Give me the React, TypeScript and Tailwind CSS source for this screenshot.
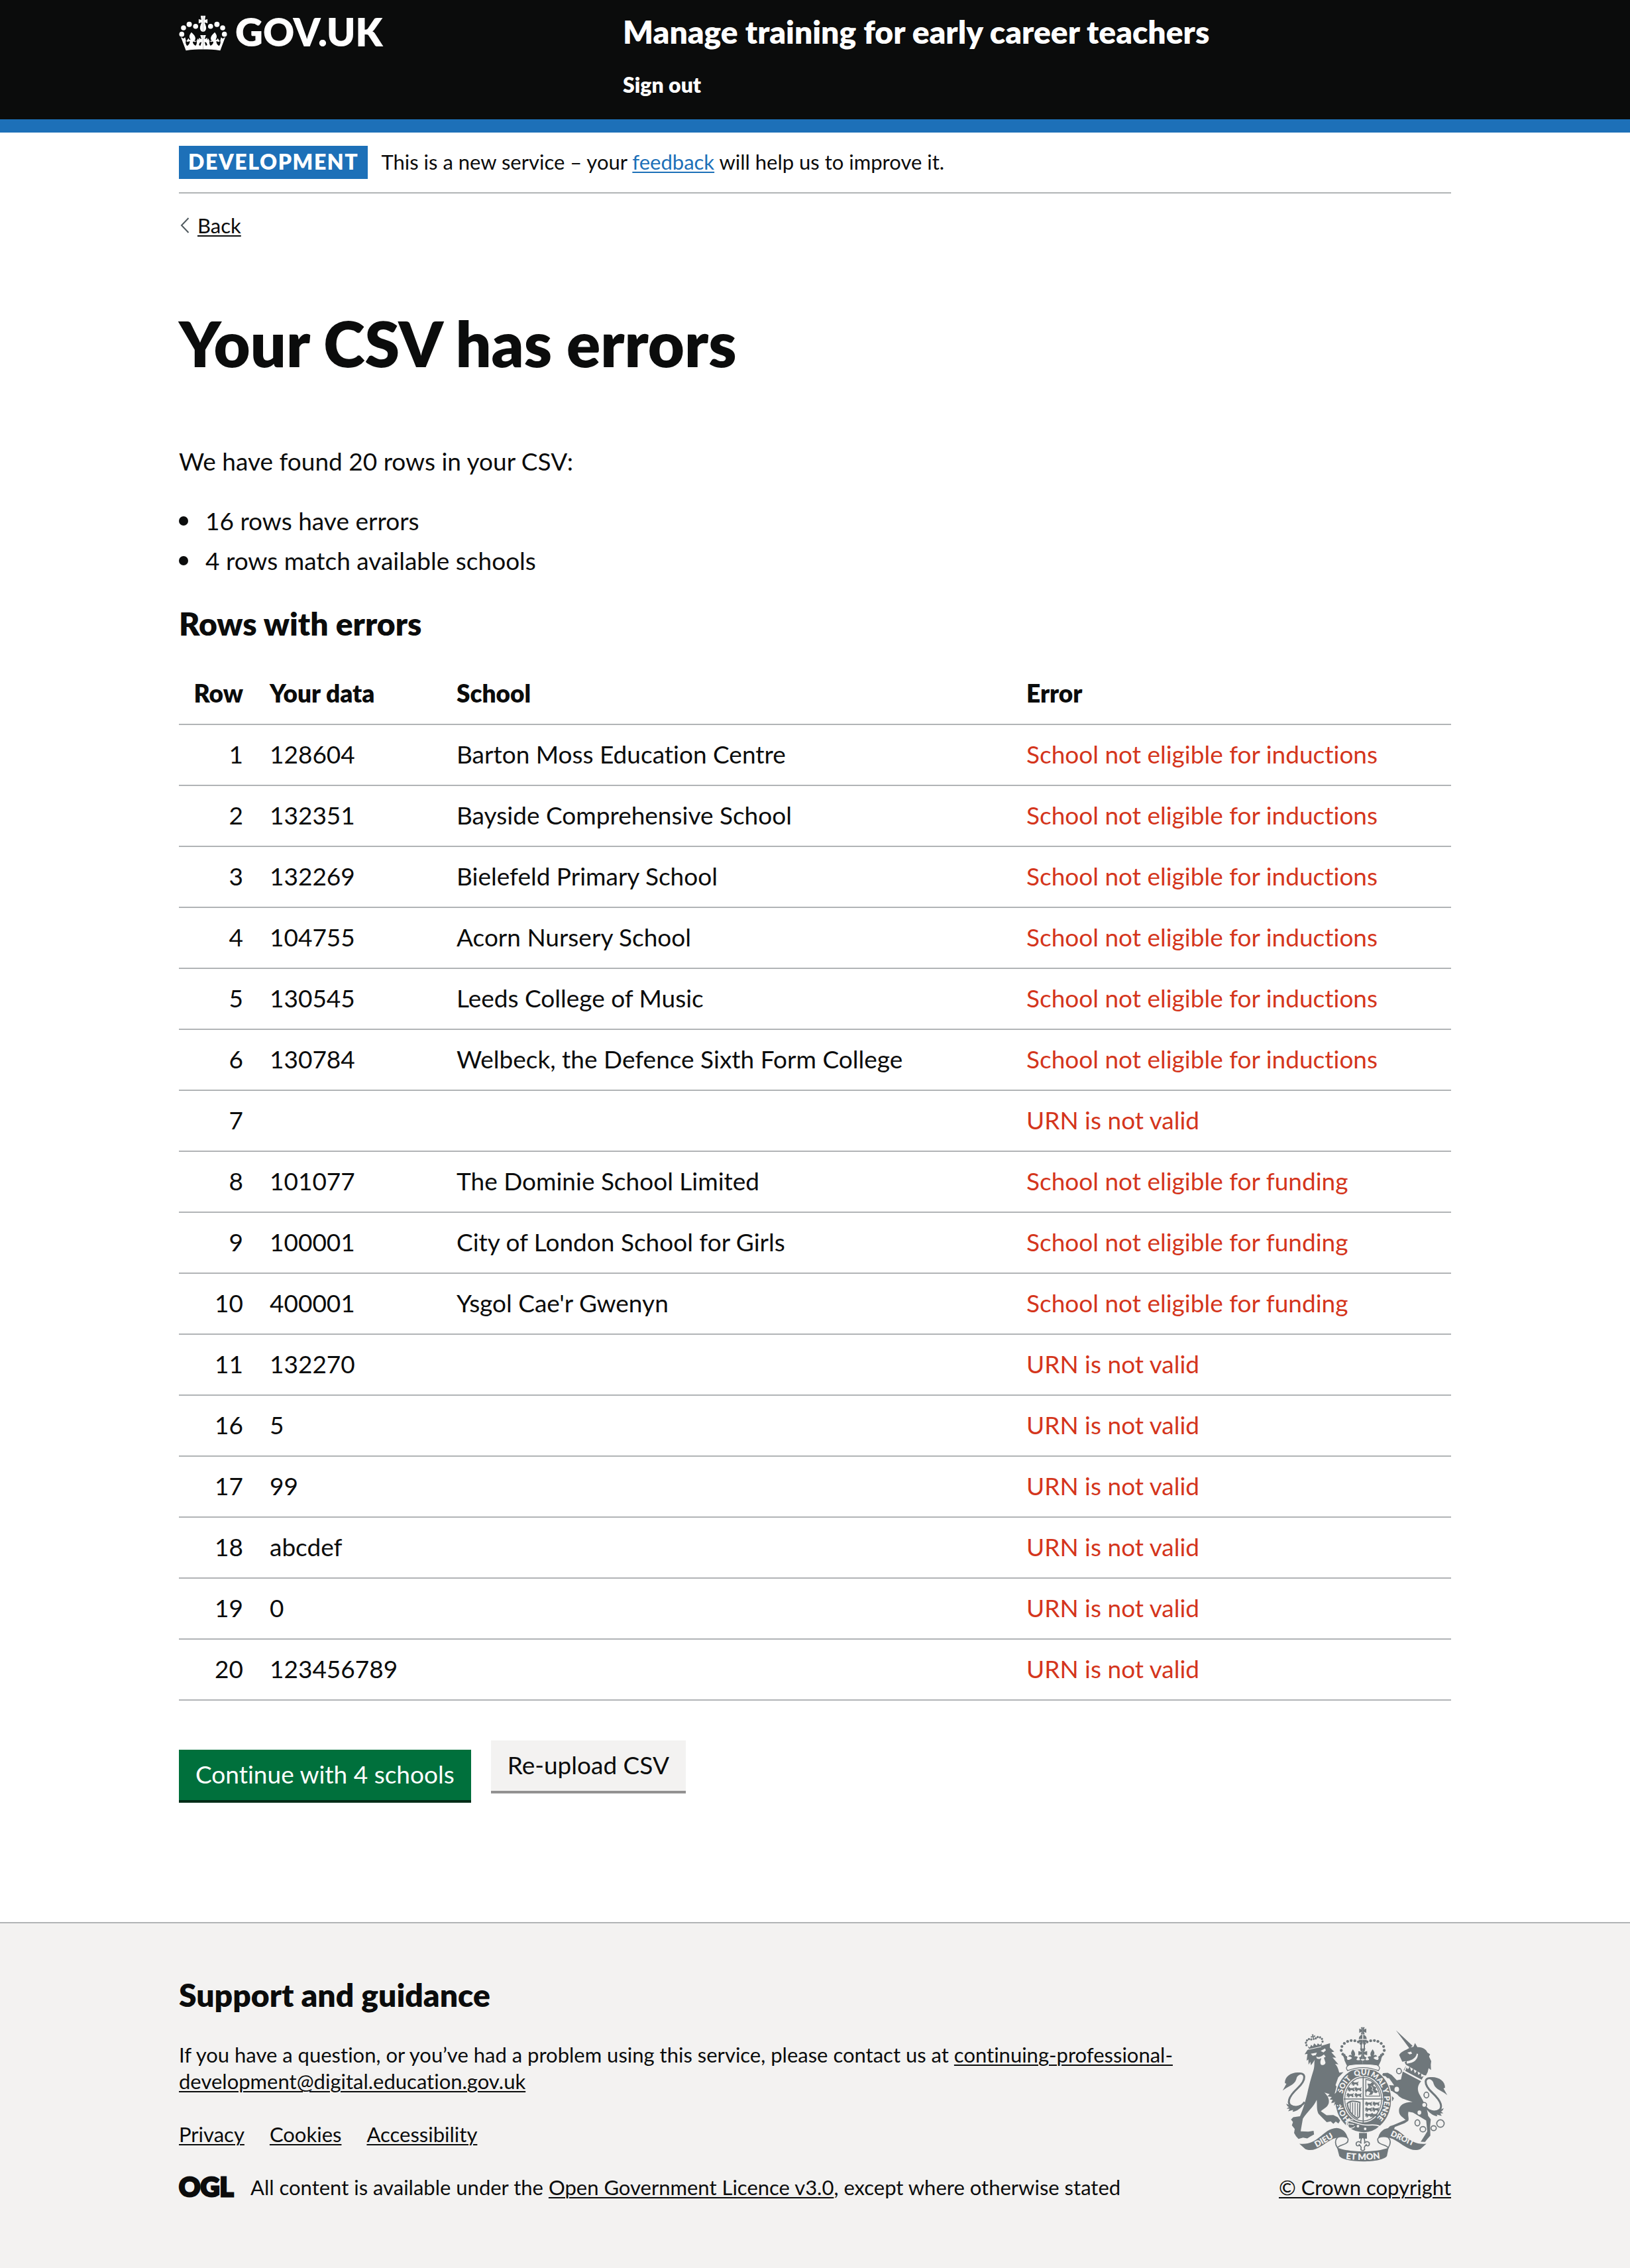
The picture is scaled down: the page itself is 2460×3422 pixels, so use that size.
import React from "react";

type ErrorRow = { row: number; data: string; school: string; error: string };

const INDUCTIONS = "School not eligible for inductions";
const FUNDING = "School not eligible for funding";
const INVALID = "URN is not valid";

const rows: ErrorRow[] = [
  { row: 1, data: "128604", school: "Barton Moss Education Centre", error: INDUCTIONS },
  { row: 2, data: "132351", school: "Bayside Comprehensive School", error: INDUCTIONS },
  { row: 3, data: "132269", school: "Bielefeld Primary School", error: INDUCTIONS },
  { row: 4, data: "104755", school: "Acorn Nursery School", error: INDUCTIONS },
  { row: 5, data: "130545", school: "Leeds College of Music", error: INDUCTIONS },
  { row: 6, data: "130784", school: "Welbeck, the Defence Sixth Form College", error: INDUCTIONS },
  { row: 7, data: "", school: "", error: INVALID },
  { row: 8, data: "101077", school: "The Dominie School Limited", error: FUNDING },
  { row: 9, data: "100001", school: "City of London School for Girls", error: FUNDING },
  { row: 10, data: "400001", school: "Ysgol Cae'r Gwenyn", error: FUNDING },
  { row: 11, data: "132270", school: "", error: INVALID },
  { row: 16, data: "5", school: "", error: INVALID },
  { row: 17, data: "99", school: "", error: INVALID },
  { row: 18, data: "abcdef", school: "", error: INVALID },
  { row: 19, data: "0", school: "", error: INVALID },
  { row: 20, data: "123456789", school: "", error: INVALID },
];

const CONTAINER = "mx-auto w-full max-w-[1920px]";
const LINK = "underline decoration-2 underline-offset-[3px]";

/* Half of the header crown; the other half is its mirror image. */
function CrownHalf() {
  return (
    <>
      <circle cx="41" cy="124" r="11.5" />
      <circle cx="49" cy="95" r="11.5" />
      <circle cx="75" cy="79" r="12" />
      <circle cx="104" cy="88" r="11.5" />
      <path d="M138 40h-11l3 19c-3-1-8-2-12-4v20c4-2 9-4 13-4-1 6-7 14-7 25 0 9 6 17 14 17z" />
      <path d="M85 115c-7 9-12 17-7 28l3 7c-5 0-8-2-8-6l-2-1-9 13 8 3c2-3 4-4 8-2-1 11-6 17-13 20-6-8-8-15-5-24l-4-15-3 2c-1 3-4 4-7 2l-9-5 23 61c26-4 52-5 78-5v-17c-7 1-16 0-19-3 2-6 4-11 5-17l-10-12-3 3c3 4-1 8-12 8 8-14 4-24-14-40zm6 44c4-2 8-2 11 1l6-6c3 8 1 18-4 22-7-2-12-9-13-17z" />
      <path d="M138 128h-13l6 18c-4-1-8-3-12-6v25c4-3 8-5 12-6l-5 18h12z" />
    </>
  );
}

function Crown() {
  return (
    <svg viewBox="28 38 220 165" className="h-[55px] w-[73px] shrink-0" fill="currentColor" aria-hidden="true">
      <CrownHalf />
      <g transform="translate(276 0) scale(-1 1)">
        <CrownHalf />
      </g>
    </svg>
  );
}

function ArmsTail() {
  return (
    <g>
      <path d="M158 299c58-18 51 27 12 63-41 38-54 72-22 83 21 6 40 0 54-20" fill="none" stroke="#6f777b" strokeWidth="9" />
      <path d="M178 291c-36-3-67 18-66 48l7 3-17 31c18-18 54-24 62-52 2-11 8-18 20-22z" />
      <path d="M118 432c4 10 6 13 13 15l-11 8 14 1-7 11 23-6-3 8c19-2 31-12 44-25l-9-6-30 10z" />
    </g>
  );
}

function ArmsCrownHalf() {
  return (
    <>
      {[
        [390, 221], [376, 207], [369, 190], [372, 172], [383, 158], [398, 149], [414, 145], [431, 146], [447, 151], [459, 158],
      ].map(([x, y]) => (
        <circle key={x} cx={x} cy={y} r="6.5" />
      ))}
      <path d="M467 84h-9l4 11-11-5v20l11-5-4 12h9z" />
      <path d="M465 118v20h-16c0-10 6-18 16-20zM448 142h19v14c-10 0-17-5-19-14z" />
      <rect x="457" y="161" width="6" height="31" />
      <path d="M422 185c-7 11-12 17-4 28-8-5-13-4-17 5 8-1 13 1 17 7-8 7-14 9-21 7l-11-27-11 8c6 6 8 14 9 23l14 30c21-7 46-10 69-10v-19l-9-4 5-17-16 7c-6-7-11-8-18-6 6-11 3-17-7-32z" />
      <path d="M467 181h-13l8 16-15-4v19l15-5-7 22h12z" />
      <path d="M438 232c6 3 12 4 17 1l-5-11c-4-3-7-1-12 10z" fill="#f3f2f1" />
    </>
  );
}

/* A small walking lion, as repeated in the quarters of the shield. */
function PassantLion({ x, y }: { x: number; y: number }) {
  return (
    <path
      transform={`translate(${x} ${y})`}
      d="M2 4l7-3 5 5 14-1 7-5-4 9 2 10-7 1-1-5-9-1-3 7-7-1 4-6-9 4 3-7-5-3 6-1z"
    />
  );
}

function RoyalArms() {
  return (
    <svg viewBox="100 82 754 616" className="h-[204px] w-[250px]" fill="#6f777b" role="img" aria-label="Royal coat of arms">
      <defs>
        <path id="arms-garter" d="M469 525A96 112 0 0 1 469 301A96 112 0 0 1 469 525" />
        <path id="arms-left" d="M242 640Q298 610 348 578" />
        <path id="arms-foot" d="M378 683Q467 695 558 681" />
        <path id="arms-right" d="M578 572Q640 600 714 634" />
      </defs>

      {/* lion */}
      <ArmsTail />
      <path d="M202 207l13-19 84-25 19-6-1 20 20 18-13 3 22 25-17-1 27 31-15-2c11 12 14 22 19 40l19-2-24 24-12 35c17 26 29 47 38 78l-11 20-9-8-6 11-9-13-10 5 4-15-17 4 8-14-15-3 10-11-20-3 10-10-24-7c15 15 24 29 20 48-6 21-23 24-36 37l26 18 31-1 20 10 11 15-8 14-12-9-11 10-12-11-18 4-16-16-22-23c-10-21-5-41-8-63-13 32-44 55-63 86l-6 34-4 23 35 2 24-4 2 17-15 8-16 10-19-4-21 6-11-12-9-15 3-18-13-17 5-15-9-11 10-11 31-4c13-30 22-59 32-99 7-33 17-73 30-113 6-20 1-34 6-46l-18 26-3-17-8 14-1-24-8 6 4-31z" />
      <path d="M230 205l28-5-5 11-14 3zM275 192l20-11 4 8-11 10zM255 218c12 5 22 0 35-10l8 11-8 4 7 22c0 12-22 18-23 2-1-9 3-14 4-22l-9 4-11-2z" fill="#f3f2f1" />
      <g transform="rotate(-13 246 155)">
        <path d="M213 164l9 7 8-10 6 9 9-13 9 13 7-9 8 10 10-7-6 21h-54z" />
        <path d="M243 116h8l-2 8 8-2v8l-8-2 2 14h-8l2-14-8 2v-8l8 2z" />
        {[[209, 158], [209, 146], [216, 137], [226, 133], [236, 137], [257, 137], [267, 133], [277, 137], [284, 146], [284, 158]].map(([x, y]) => (
          <circle key={`${x}-${y}`} cx={x} cy={y} r="5" />
        ))}
        <path d="M217 179h56" stroke="#f3f2f1" strokeWidth="3" />
      </g>

      {/* unicorn */}
      <g transform="translate(954 21) scale(-1 1)">
        <ArmsTail />
      </g>
      <path d="M618 98l76 71-14 12zM633 211c8-17 27-20 49-34l16-4 7-17 11 19c23-2 40 10 46 25l12 7-5 11 10 21-2 15 1 25-11-8-4 17-8 16c-29-2-58-16-77-40l-12-4-8-16 7-6-18 3z" />
      <path d="M668 250c32-2 49-17 51-44l-6-2c-3 18-20 31-46 35zM670 200l17-5 5 9-11 4z" fill="#f3f2f1" />
      <path d="M663 255l94 54-17 25-88-48z" fill="#f3f2f1" />
      <path d="M663 262l10 14 8-13 7 22 10-13 6 22 12-14 4 22 14-12-1 20 14-3-8 18-86-45z" />
      <path d="M666 264l-9 21 78 44 11-20" fill="none" stroke="#f3f2f1" strokeWidth="5" />
      <path d="M649 286l84 44c-18 20-19 39-6 63 19 34 35 61 38 95l12 16-3 31 1 43-16 18-8 11-20-1 18-28 12-20-5-49-60-36-21-4c-4 20 5 30-1 42l-16 10-45 18-5 15-35-1 18-18 16-5 55-24c-17-15-30-21-30-42 0-21 19-39 62-39-23-10-54-12-69-34l-26-17-11 1 3 14 18 18-6 13-14-5-10-8 7-3-7-12-12-34 15-10 28 1-12-17-11-15-8-1-9-9-16-1 5-13 22-1 18 10 23 24 19-4z" />

      {/* chain */}
      <g fill="#f3f2f1" stroke="#6f777b" strokeWidth="5">
        <ellipse cx="632" cy="284" rx="11" ry="12" />
        <ellipse cx="622" cy="367" rx="13" ry="14" />
        <ellipse cx="757" cy="393" rx="11" ry="13" />
        <ellipse cx="747" cy="438" rx="11" ry="11" />
        <ellipse cx="725" cy="473" rx="11" ry="12" />
        <ellipse cx="716" cy="520" rx="11" ry="14" fill="none" />
        <ellipse cx="741" cy="549" rx="13" ry="12" fill="none" />
        <ellipse cx="790" cy="544" rx="12" ry="11" fill="none" />
        <circle cx="821" cy="523" r="17" fill="none" />
      </g>

      {/* garter and shield */}
      <ellipse cx="469" cy="415" rx="132" ry="152" fill="#f3f2f1" />
      <ellipse cx="469" cy="415" rx="127" ry="147" />
      <ellipse cx="469" cy="412" rx="91" ry="106" fill="#f3f2f1" />
      <ellipse cx="469" cy="412" rx="84" ry="99" fill="none" stroke="#6f777b" strokeWidth="4" />
      <path d="M469 308v212M380 411h178" stroke="#6f777b" strokeWidth="5" />
      <PassantLion x={414} y={330} />
      <PassantLion x={396} y={356} />
      <PassantLion x={428} y={356} />
      <PassantLion x={392} y={383} />
      <PassantLion x={428} y={383} />
      <path d="M481 320v78h66M481 322c32 3 54 24 64 74" fill="none" stroke="#6f777b" strokeWidth="4" />
      <path d="M488 341l14 1 7-7 10 7-5 9 15 7-4 11 12 8-9 8-13-5-5 11-16 3 8-13-14-6-7 9-4-12 12-8 4-8z" />
      <path d="M505 352l8 9-4 10 9 6" fill="none" stroke="#f3f2f1" strokeWidth="3" />
      <PassantLion x={476} y={422} />
      <PassantLion x={510} y={422} />
      <PassantLion x={476} y={448} />
      <PassantLion x={508} y={448} />
      <PassantLion x={476} y={474} />
      <PassantLion x={502} y={474} />
      <path d="M396 432c15-15 33-12 58-5l-2 65-10 7c-21-11-41-29-46-67z" fill="none" stroke="#6f777b" strokeWidth="6" />
      <path d="M410 426v41M421 428v50M432 428v58M443 430v62" stroke="#6f777b" strokeWidth="4" />
      <g fill="#f3f2f1" fontFamily="Lato, sans-serif" fontWeight="800" fontSize="35" textAnchor="middle">
        <text><textPath href="#arms-garter" startOffset="16%">HON</textPath></text>
        <text><textPath href="#arms-garter" startOffset="35%">SOIT</textPath></text>
        <text><textPath href="#arms-garter" startOffset="49%">QUI</textPath></text>
        <text><textPath href="#arms-garter" startOffset="63%">MAL Y</textPath></text>
        <text><textPath href="#arms-garter" startOffset="81%">PENSE</textPath></text>
      </g>
      <path d="M395 508c30 5 60 24 100 22 23-2 36-2 50 6-24 23-56 32-89 28-32-4-52-17-64-36z" stroke="#f3f2f1" strokeWidth="5" />
      <circle cx="445" cy="535" r="6" fill="#f3f2f1" />
      <circle cx="478" cy="547" r="6" fill="#f3f2f1" />
      <path d="M424 507c-17-6-27 2-25 15 3 12-3 18 7 22 12 3 18-1 25-8M400 524l27 4" fill="none" stroke="#f3f2f1" strokeWidth="4" />

      {/* paw on the shield */}
      <path d="M330 395l26-22 22 40 2 26-12 3-5-9-6 11-9-12-11 6 3-15-16 1 9-10z" />

      {/* crown above the shield */}
      <path d="M393 258h149v28q-72-22-149 0z" fill="#f3f2f1" />
      <ArmsCrownHalf />
      <g transform="translate(934 0) scale(-1 1)">
        <ArmsCrownHalf />
      </g>
      <path d="M405 256c-16 8-15 17-7 26 45-18 95-18 140 0 8-9 9-18-6-26-42-6-85-6-127 0z" fill="#f3f2f1" stroke="#6f777b" strokeWidth="4" />

      {/* motto ribbon */}
      <path d="M450 566h36v26h-36z" />
      <path d="M467 583c-8 9-12 18-7 31-8-14-25-9-23 4 2 9 12 9 14 1 6 6 8 9 9 14-4 9 1 13 7 13s11-4 7-13c1-5 3-8 9-14 2 8 12 8 14-1 2-13-15-18-23-4 5-13 1-22-7-31z" fill="#f3f2f1" stroke="#6f777b" strokeWidth="5" />
      <path d="M178 615c42 5 68-11 92-30 25-20 45-41 78-42 34 2 53 31 52 66l-14 3c-6-18-20-26-36-24-26 4-46 23-74 39-23 14-46 23-71 12z" />
      <path d="M352 586c-13 14-12 30 0 48 10-18 48-10 48-39-1-12-29-16-48-9z" fill="#f3f2f1" stroke="#6f777b" strokeWidth="5" />
      <path d="M757 615c-42 5-68-11-92-30-25-20-45-41-78-42-34 2-53 31-52 66l14 3c6-18 20-26 36-24 26 4 46 23 74 39 23 14 46 23 71 12z" />
      <path d="M583 586c13 14 12 30 0 48-10-18-48-10-48-39 1-12 29-16 48-9z" fill="#f3f2f1" stroke="#6f777b" strokeWidth="5" />
      <path d="M350 632c55 24 180 24 235 0l-8 39c-20 33-195 33-217 0z" />
      <g fill="#f3f2f1" fontFamily="Lato, sans-serif" fontWeight="800" textAnchor="middle">
        <text fontSize="38"><textPath href="#arms-left" startOffset="50%">DIEU</textPath></text>
        <text fontSize="40"><textPath href="#arms-foot" startOffset="50%">ET MON</textPath></text>
        <text fontSize="36"><textPath href="#arms-right" startOffset="48%">DROIT</textPath></text>
      </g>
    </svg>
  );
}

export default function App() {
  return (
    <div className="bg-white font-['Lato',sans-serif] text-[37px] leading-[50px] text-[#0b0c0c] [font-variant-ligatures:none]">
      <header className="border-b-[20px] border-[#1d70b8] bg-[#0b0c0c] pt-[18px] pb-8 text-white">
        <div className={`${CONTAINER} grid grid-cols-[670px_1fr] items-start`}>
          <a href="#home" className="flex items-end gap-3" aria-label="GOV.UK">
            <Crown />
            <span className="text-[58px] leading-[60px] font-extrabold">GOV.UK</span>
          </a>
          <div>
            <a href="#service" className="block text-[48px] leading-[60px] font-extrabold">
              Manage training for early career teachers
            </a>
            <nav className="mt-[30px] flex">
              <a href="#sign-out" className="text-[32px] leading-[40px] font-extrabold">
                Sign out
              </a>
            </nav>
          </div>
        </div>
      </header>

      <div className={CONTAINER}>
        <div className="flex items-start gap-5 border-b-2 border-[#b1b4b6] py-5 text-[31px] leading-[48px]">
          <strong className="bg-[#1d70b8] px-[14px] pb-[2px] text-[32px] font-extrabold tracking-wider text-white">DEVELOPMENT</strong>
          <p>
            This is a new service – your{" "}
            <a href="#feedback" className={`${LINK} text-[#1d70b8]`}>
              feedback
            </a>{" "}
            will help us to improve it.
          </p>
        </div>

        <a href="#back" className="mt-7 flex w-fit items-center gap-3 pl-[2px] text-[31px] leading-[40px]">
          <svg viewBox="0 0 14 24" className="h-6 w-[14px]" fill="none" stroke="#505a5f" strokeWidth="2" aria-hidden="true">
            <path d="M12.500 1L2 12l10.500 11" />
          </svg>
          <span className={LINK}>Back</span>
        </a>

        <main className="pb-[180px]">
          <h1 className="mt-[107px] text-[95px] leading-[100px] font-extrabold">Your CSV has errors</h1>
          <p className="mt-[104px]">We have found 20 rows in your CSV:</p>
          <ul className="mt-10 space-y-[10px]">
            {["16 rows have errors", "4 rows match available schools"].map((item) => (
              <li key={item} className="flex items-center gap-[26px] before:size-[14px] before:rounded-full before:bg-[#0b0c0c]">
                {item}
              </li>
            ))}
          </ul>
          <h2 className="mt-10 text-[48px] leading-[60px] font-extrabold">Rows with errors</h2>

          <table className="mt-[31px] w-full border-collapse text-left">
            <thead className="font-extrabold">
              <tr className="border-b-2 border-[#b1b4b6]">
                <th scope="col" className="w-[137px] pt-[19px] pr-10 pb-[21px] text-right font-extrabold">Row</th>
                <th scope="col" className="w-[282px] pt-[19px] pr-10 pb-[21px] font-extrabold">Your data</th>
                <th scope="col" className="w-[860px] pt-[19px] pr-10 pb-[21px] font-extrabold">School</th>
                <th scope="col" className="pt-[19px] pb-[21px] font-extrabold">Error</th>
              </tr>
            </thead>
            <tbody>
              {rows.map((r) => (
                <tr key={r.row} className="border-b-2 border-[#b1b4b6]">
                  <td className="pt-[19px] pr-10 pb-[21px] text-right">{r.row}</td>
                  <td className="pt-[19px] pr-10 pb-[21px]">{r.data}</td>
                  <td className="pt-[19px] pr-10 pb-[21px]">{r.school}</td>
                  <td className="pt-[19px] pb-[21px] text-[#d4351c]">{r.error}</td>
                </tr>
              ))}
            </tbody>
          </table>

          <div className="mt-[60px] flex flex-wrap items-start gap-[30px]">
            <button type="button" className="mt-[14px] border-b-4 border-[#002d18] bg-[#00703c] px-[25px] pt-[18px] pb-5 leading-[38px] text-white">
              Continue with 4 schools
            </button>
            <button type="button" className="border-b-4 border-[#929191] bg-[#f3f2f1] px-[25px] pt-[18px] pb-5 leading-[38px]">
              Re-upload CSV
            </button>
          </div>
        </main>
      </div>

      <footer className="border-t-2 border-[#b1b4b6] bg-[#f3f2f1] pt-[78px] pb-[102px] text-[31px] leading-[40px]">
        <div className={`${CONTAINER} flex items-end justify-between`}>
          <div className="flex-1 pr-20">
            <h2 className="text-[48px] leading-[60px] font-extrabold">Support and guidance</h2>
            <p className="mt-10">
              If you have a question, or you’ve had a problem using this service, please contact us at{" "}
              <a href="mailto:continuing-professional-development@digital.education.gov.uk" className={LINK}>
                continuing-professional-development@digital.education.gov.uk
              </a>
            </p>
            <ul className="mt-10 flex gap-[38px]">
              <li><a href="#privacy" className={LINK}>Privacy</a></li>
              <li><a href="#cookies" className={LINK}>Cookies</a></li>
              <li><a href="#accessibility" className={LINK}>Accessibility</a></li>
            </ul>
            <div className="mt-10 flex items-center gap-[26px]">
              <svg viewBox="0 0 82 40" className="h-10 w-[82px] shrink-0 overflow-visible" fill="currentColor" role="img" aria-label="Open Government Licence">
                <text x="0" y="34" fontFamily="Lato, sans-serif" fontWeight="900" fontSize="40" stroke="currentColor" strokeWidth="3">OGL</text>
              </svg>
              <p>
                All content is available under the{" "}
                <a href="#licence" className={LINK}>Open Government Licence v3.0</a>, except where otherwise stated
              </p>
            </div>
          </div>
          <a href="#copyright" className="flex flex-col items-center gap-[18px]">
            <RoyalArms />
            <span className={LINK}>© Crown copyright</span>
          </a>
        </div>
      </footer>
    </div>
  );
}
